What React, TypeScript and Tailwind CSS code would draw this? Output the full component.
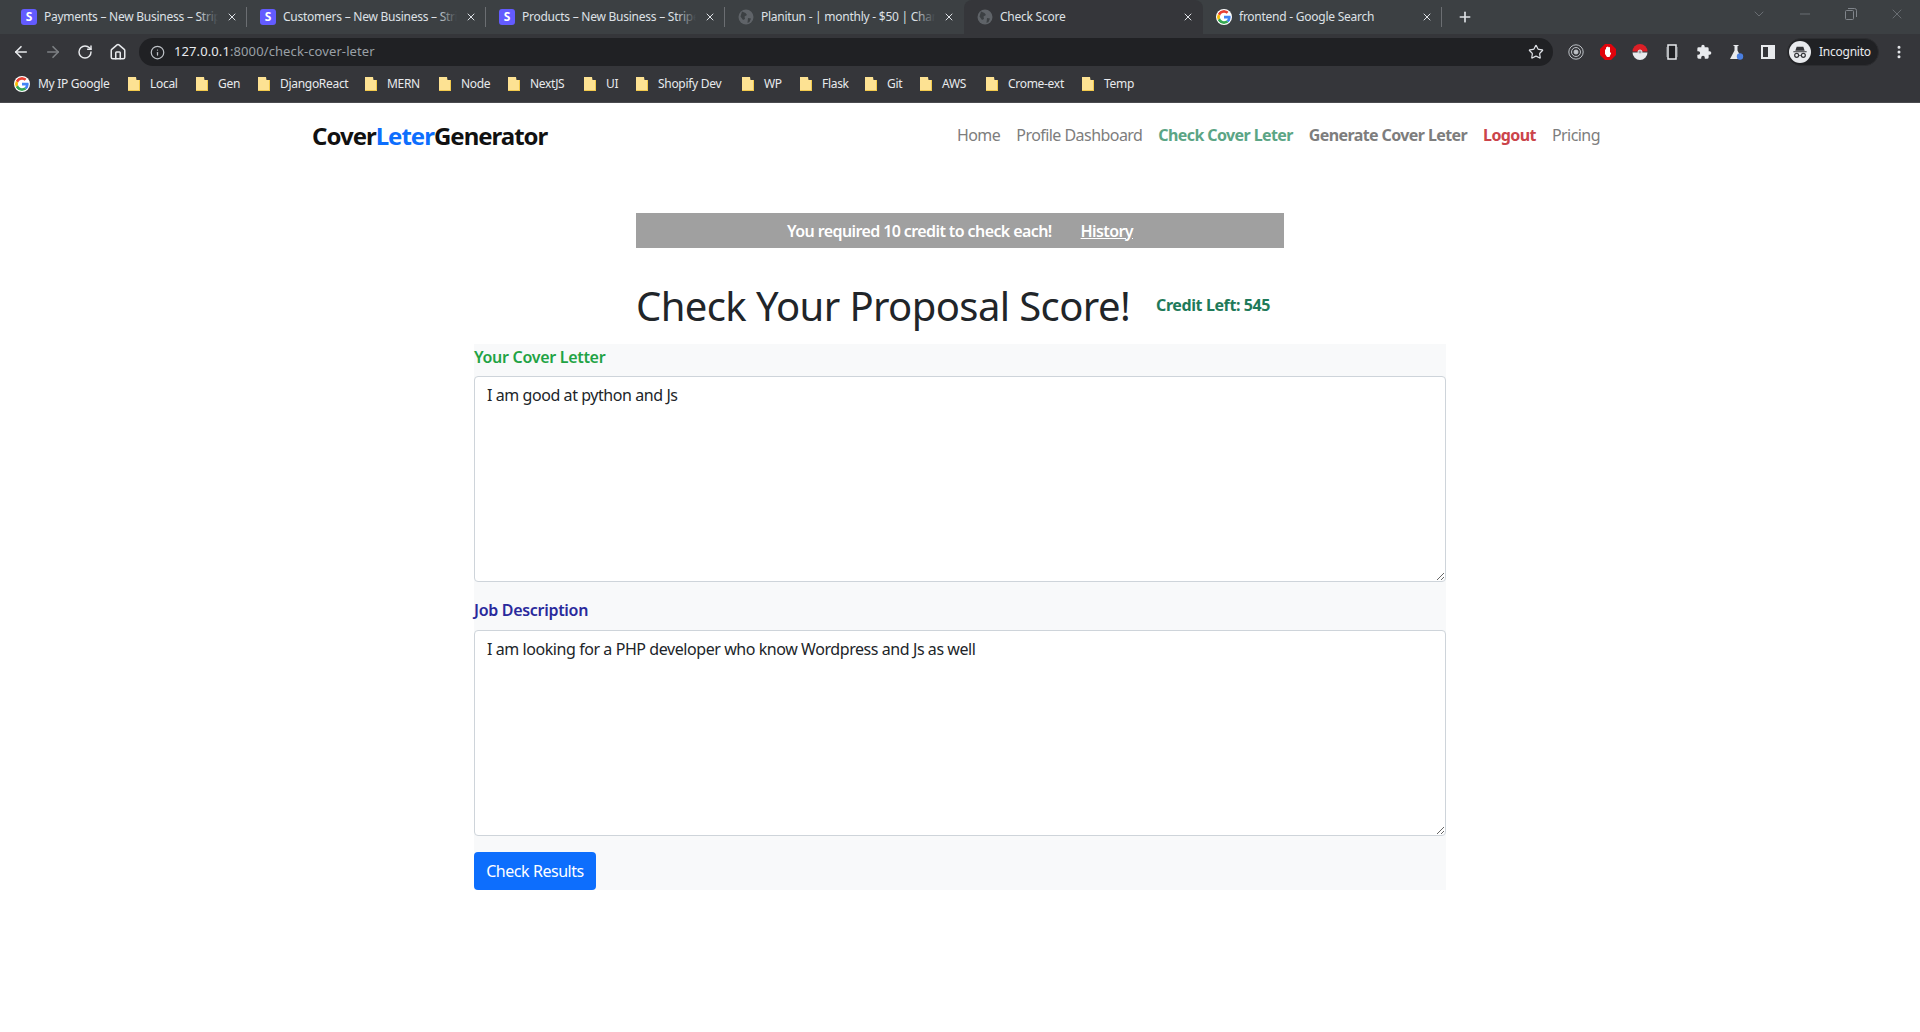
import { ArrowLeft, ArrowRight, RotateCw, Home, Info, Star, Plus, X, Minus, ChevronDown, EllipsisVertical } from 'lucide-react'

const tabs = [
  { title: 'Payments – New Business – Stripe', icon: 'stripe' },
  { title: 'Customers – New Business – Stripe', icon: 'stripe' },
  { title: 'Products – New Business – Stripe', icon: 'stripe' },
  { title: 'Planitun - | monthly - $50 | Change', icon: 'globe' },
  { title: 'Check Score', icon: 'globe', active: true },
  { title: 'frontend - Google Search', icon: 'google' },
]

const bookmarks = [
  { name: 'Local', width: 'w-[68px]' },
  { name: 'Gen', width: 'w-[62px]' },
  { name: 'DjangoReact', width: 'w-[107px]' },
  { name: 'MERN', width: 'w-[74px]' },
  { name: 'Node', width: 'w-[69px]' },
  { name: 'NextJS', width: 'w-[76px]' },
  { name: 'UI', width: 'w-[52px]' },
  { name: 'Shopify Dev', width: 'w-[106px]' },
  { name: 'WP', width: 'w-[58px]' },
  { name: 'Flask', width: 'w-[65px]' },
  { name: 'Git', width: 'w-[55px]' },
  { name: 'AWS', width: 'w-[66px]' },
  { name: 'Crome-ext', width: 'w-[96px]' },
  { name: 'Temp', width: 'w-[60px]' },
]

function GoogleIcon() {
  return (
    <svg viewBox="0 0 48 48" className="h-4 w-4 shrink-0 rounded-full bg-white p-px">
      <path fill="#EA4335" d="M24 9.5c3.5 0 6.700 1.200 9.200 3.600l6.900-6.900C35.900 2.400 30.400 0 24 0 14.600 0 6.500 5.400 2.600 13.200l8 6.200C12.500 13.700 17.800 9.500 24 9.500z" />
      <path fill="#4285F4" d="M47 24.500c0-1.600-.1-3.100-.4-4.500H24v9h13c-.6 3-2.300 5.500-4.800 7.200l7.700 6c4.500-4.200 7.100-10.300 7.100-17.700z" />
      <path fill="#FBBC05" d="M10.600 28.600c-.5-1.400-.8-3-.8-4.600s.3-3.200.8-4.600l-8-6.200C.9 16.500 0 20.100 0 24s.9 7.500 2.600 10.800l8-6.200z" />
      <path fill="#34A853" d="M24 48c6.500 0 11.900-2.100 15.900-5.800l-7.700-6c-2.200 1.400-4.900 2.300-8.200 2.300-6.200 0-11.500-4.200-13.400-9.900l-8 6.200C6.500 42.600 14.600 48 24 48z" />
    </svg>
  )
}

function StripeIcon() {
  return (
    <div className="flex h-4 w-4 shrink-0 items-center justify-center rounded-[3px] bg-[#635bff] text-[12px] font-bold leading-none text-white">
      S
    </div>
  )
}

function GlobeIcon() {
  return (
    <svg viewBox="0 0 16 16" className="h-4 w-4 shrink-0">
      <circle cx="8" cy="8" r="7.500" fill="#5f6368" />
      <path fill="#3c4043" d="M4 2.500 7.500 4 9 6 6.500 7.500 7 10 5 11 2.500 7.500ZM10 9l3 .5-1.500 3.500-2 1Z" />
    </svg>
  )
}

function FolderIcon() {
  return (
    <svg viewBox="0 0 12 14" className="h-[14px] w-3 shrink-0">
      <path fill="#fde293" d="M0 0h8l.5 3H12v11H0Z" />
      <path fill="#f2c94c" d="M0 13h12v1H0ZM11 3h1v11h-1Z" />
    </svg>
  )
}

function TabStrip() {
  return (
    <div className="flex h-[34px] items-stretch bg-[#3c4043] pl-2">
      {tabs.map((tab) => (
        <div
          key={tab.title}
          className={
            tab.active
              ? 'relative flex w-[239px] items-center rounded-t-lg bg-[#35363a] pl-[13px] pr-[9px]'
              : 'relative flex w-[239px] items-center pl-[13px] pr-[9px]'
          }
        >
          {tab.icon === 'stripe' && <StripeIcon />}
          {tab.icon === 'globe' && <GlobeIcon />}
          {tab.icon === 'google' && <GoogleIcon />}
          <div className="relative ml-[7px] min-w-0 flex-1 overflow-hidden whitespace-nowrap text-[12px] tracking-[-0.25px] text-[#dee1e6]">
            {tab.title}
            {!tab.active && <span className="absolute inset-y-0 right-0 w-5 bg-gradient-to-r from-transparent to-[#3c4043]" />}
          </div>
          <X className="ml-2 h-3 w-3 shrink-0 text-[#dee1e6]" />
          {!tab.active && tab.title !== 'Planitun - | monthly - $50 | Change' && (
            <span className="absolute right-0 top-[7px] h-5 w-px bg-[#6b6e72]" />
          )}
        </div>
      ))}
      <div className="ml-[15px] flex items-center">
        <Plus className="h-4 w-4 text-[#dee1e6]" strokeWidth={2.500} />
      </div>
      <div className="ml-auto flex items-start pt-[6px] text-[#80858b]">
        <ChevronDown className="mr-[30px] h-4 w-4" strokeWidth={1} />
        <Minus className="mr-8 h-4 w-4" strokeWidth={1} />
        <svg viewBox="0 0 12 12" className="mr-8 mt-[2px] h-3 w-3" fill="none" stroke="#80858b">
          <rect x="0.5" y="2.5" width="8" height="9" rx="1" />
          <path d="M3 .5h6.500a2 2 0 0 1 2 2V9" />
        </svg>
        <X className="mr-[15px] h-4 w-4" strokeWidth={1} />
      </div>
    </div>
  )
}

function Toolbar() {
  return (
    <div className="flex h-9 items-center bg-[#35363a] pl-3">
      <ArrowLeft className="h-[18px] w-[18px] text-[#e8eaed]" strokeWidth={2.200} />
      <ArrowRight className="ml-[14px] h-[18px] w-[18px] text-[#7d8084]" strokeWidth={2.200} />
      <RotateCw className="ml-[15px] h-4 w-4 text-[#e8eaed]" strokeWidth={2.200} />
      <Home className="ml-4 h-[18px] w-[18px] text-[#e8eaed]" strokeWidth={2} />
      <div className="ml-3 flex h-7 w-[1414px] items-center rounded-full bg-[#202124] pl-[11px] pr-[9px]">
        <Info className="h-[15px] w-[15px] text-[#bdc1c6]" />
        <span className="ml-[9px] text-[13px] tracking-[0.1px] text-[#e8eaed]">
          127.0.0.1<span className="text-[#9aa0a6]">:8000/check-cover-leter</span>
        </span>
        <Star className="ml-auto h-4 w-4 text-[#dee1e6]" strokeWidth={1.800} />
      </div>
      <div className="ml-[15px] flex items-center gap-4">
        <svg viewBox="0 0 16 16" className="h-4 w-4" fill="none" stroke="#bdc1c6" strokeWidth="1">
          <circle cx="8" cy="8" r="7.200" />
          <circle cx="8" cy="8" r="4.500" />
          <circle cx="8" cy="8" r="2" fill="#bdc1c6" />
        </svg>
        <svg viewBox="0 0 16 16" className="h-4 w-4">
          <path fill="#e0030b" d="M5 0h6l5 5v6l-5 5H5l-5-5V5Z" />
          <path fill="#fff" d="M5 6c0-1 1-1 1-.5V3.500c0-.8 1-.8 1 0V3c0-.8 1.500-.8 1.500 0v.5c0-.8 1.500-.8 1.500 0v5.500c.5-.8 1.500-.5 1 .5L9.500 13H7L5 10Z" />
        </svg>
        <svg viewBox="0 0 16 16" className="h-4 w-4">
          <path fill="#dc1f26" d="M.5 7.500a7.500 7.500 0 0 1 15 0Z" />
          <path fill="#e8eaed" d="M.5 8.500a7.500 7.500 0 0 0 15 0Z" />
          <circle cx="8" cy="8" r="2" fill="#9aa0a6" stroke="#e8eaed" />
        </svg>
        <svg viewBox="0 0 16 16" className="h-4 w-4" fill="none">
          <rect x="4" y="1" width="8" height="14" stroke="#e8eaed" strokeWidth="1.500" fill="#202124" />
          <path stroke="#6b6e72" d="M2.500 3v10M13.500 3v10" />
        </svg>
        <svg viewBox="0 0 24 24" className="h-4 w-4" fill="#e8eaed">
          <path d="M20.500 11H19V7a2 2 0 0 0-2-2h-4V3.500a2.500 2.500 0 0 0-5 0V5H4a2 2 0 0 0-2 2v3.800h1.500a2.700 2.700 0 0 1 0 5.400H2V20a2 2 0 0 0 2 2h3.800v-1.500a2.700 2.700 0 0 1 5.400 0V22H17a2 2 0 0 0 2-2v-4h1.500a2.500 2.500 0 0 0 0-5z" />
        </svg>
        <svg viewBox="0 0 16 16" className="h-4 w-4">
          <path fill="#e8eaed" d="M5.500 1h5v1h-1v4.500L14 15H2l4.500-8.500V2h-1Z" />
          <circle cx="12" cy="12.500" r="3.200" fill="#4a7fe0" />
        </svg>
        <svg viewBox="0 0 16 16" className="h-4 w-4">
          <path fill="#e8eaed" fillRule="evenodd" d="M1 1h14v14H1ZM3 3v10h5V3Z" />
        </svg>
      </div>
      <div className="ml-[11px] flex h-7 w-[92px] items-center rounded-full border border-[#2c2d30] bg-[#202124] pl-px">
        <div className="flex h-[22px] w-[22px] items-center justify-center rounded-full bg-[#e8eaed]">
          <svg viewBox="0 0 24 24" className="h-4 w-4" fill="#35363a">
            <path d="M7 4h10l2 6H5ZM2 11h20v1.500H2Z" />
            <circle cx="7" cy="17" r="3" fill="none" stroke="#35363a" strokeWidth="1.800" />
            <circle cx="17" cy="17" r="3" fill="none" stroke="#35363a" strokeWidth="1.800" />
            <path d="M10 16.500h4v1h-4Z" />
          </svg>
        </div>
        <span className="ml-2 text-[12px] tracking-[-0.25px] text-[#e8eaed]">Incognito</span>
      </div>
      <EllipsisVertical className="ml-[12px] h-4 w-4 text-[#e8eaed]" strokeWidth={2.500} />
    </div>
  )
}

function BookmarksBar() {
  return (
    <div className="flex h-[33px] items-center border-b border-[#4a4b4f] bg-[#35363a] pb-1 pl-[14px] text-[12px] tracking-[-0.3px] text-[#e8eaed]">
      <div className="flex w-[114px] shrink-0 items-center gap-2">
        <GoogleIcon />
        <span>My IP Google</span>
      </div>
      {bookmarks.map((b) => (
        <div key={b.name} className={`flex shrink-0 items-center gap-[10px] ${b.width}`}>
          <FolderIcon />
          <span className="whitespace-nowrap">{b.name}</span>
        </div>
      ))}
    </div>
  )
}

function Navbar() {
  return (
    <nav className="mx-auto flex h-[66px] w-[1296px] items-center justify-between">
      <div className="text-[24px] font-bold leading-none tracking-[-1px] text-[#111]">
        Cover<span className="text-[#0d6efd]">Leter</span>Generator
      </div>
      <div className="mb-[2px] mr-2 flex items-center gap-4 text-[16px] tracking-[-0.55px] text-[#7d7d7d]">
        <span>Home</span>
        <span>Profile Dashboard</span>
        <span className="font-bold tracking-[-0.6px] text-[#5ba585]">Check Cover Leter</span>
        <span className="font-bold tracking-[-0.6px]">Generate Cover Leter</span>
        <span className="font-bold tracking-[-0.6px] text-[#cb444a]">Logout</span>
        <span>Pricing</span>
      </div>
    </nav>
  )
}

function CoverLetterForm() {
  return (
    <form className="mx-auto mt-[14px] flex w-[972px] flex-col bg-[#f8f9fa] tracking-[-0.3px]">
      <label className="flex h-8 items-center pb-[6px] font-semibold text-[#1fa344]">Your Cover Letter</label>
      <textarea
        readOnly
        defaultValue="I am good at python and Js"
        className="h-[206px] w-full rounded border border-[#ced4da] bg-white px-3 py-[6px] text-[16px] tracking-[-0.43px] text-[#212529]"
      />
      <label className="mt-4 flex h-8 items-center pb-[9px] font-semibold text-[#2a2a9c]">Job Description</label>
      <textarea
        readOnly
        defaultValue="I am looking for a PHP developer who know Wordpress and Js as well"
        className="h-[206px] w-full rounded border border-[#ced4da] bg-white px-3 py-[6px] text-[16px] tracking-[-0.43px] text-[#212529]"
      />
      <button type="button" className="mt-4 h-[38px] w-[122px] rounded bg-[#0d6efd] text-[16px] tracking-[-0.45px] text-white">
        Check Results
      </button>
    </form>
  )
}

export default function App() {
  return (
    <div className="min-h-[1032px] bg-white font-['Noto_Sans',sans-serif]">
      <TabStrip />
      <Toolbar />
      <BookmarksBar />
      <Navbar />

      <main>
        <div className="mx-auto mt-11 flex h-[35px] w-[648px] items-center justify-center gap-[29px] bg-[#a0a0a0] font-semibold tracking-[-0.6px] text-white">
          <span>You required 10 credit to check each!</span>
          <span className="underline">History</span>
        </div>

        <div className="mx-auto mt-[34px] flex w-[648px] items-center gap-[26px] whitespace-nowrap">
          <h1 className="text-[40px] font-normal leading-[48px] tracking-[-0.6px] text-[#212529]">Check Your Proposal Score!</h1>
          <span className="mb-[3px] font-bold tracking-[-0.4px] text-[#1f7a5a]">Credit Left: 545</span>
        </div>

        <CoverLetterForm />
      </main>
    </div>
  )
}
